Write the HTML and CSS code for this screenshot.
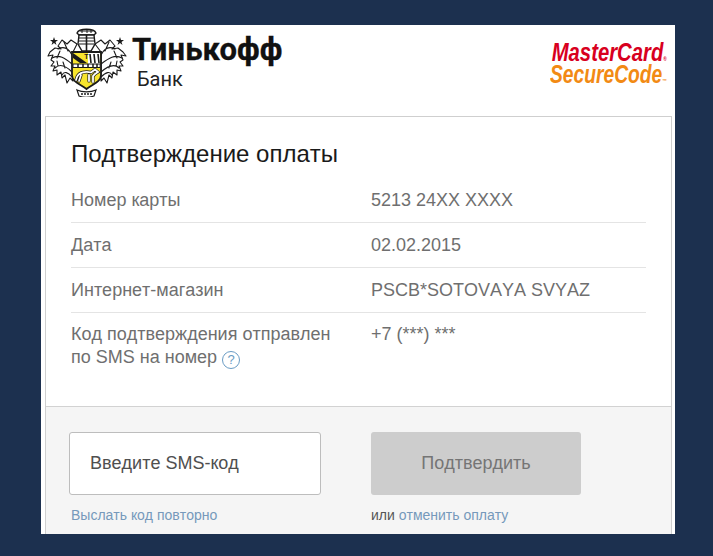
FILE: index.html
```html
<!DOCTYPE html>
<html lang="ru">
<head>
<meta charset="utf-8">
<title>Подтверждение оплаты</title>
<link rel="stylesheet" href="styles.css">
</head>
<body>
<main class="page">
  <header class="head">
    <div class="brand">
      <svg class="crest" viewBox="0 0 86 72" aria-hidden="true">
        <g fill="#fff" stroke="#1a1a1a" stroke-width="1.1" stroke-linejoin="round" stroke-linecap="round">
          <path d="M33 19 L27 15 L23 19 L18 15 L14 21 L17 24 L11 23 L6 27 L4 31 L9 30 L7 35 L10 37 L7 41 L11 41 L9 46 L13 45 L13 50 L17 47 L18 53 L21 50 L23 58 L26 53 L29 56 L29 27 Z"/>
          <path d="M14 24 C20 21 25 24 28 30 M8 33 C15 29 21 33 28 39 M11 43 C16 38 22 41 28 47 M18 50 C20 46 24 47 28 52 M20 17 L24 26 M13 33 L16 26 M14 41 L13 36 M21 43 L19 37" fill="none"/>
          <path d="M51 19 L57 15 L61 19 L66 15 L71 21 L68 24 L74 23 L79 27 L82 31 L77 30 L79 35 L76 37 L79 41 L75 41 L77 46 L73 45 L73 50 L69 47 L68 53 L65 50 L63 58 L60 53 L57 56 L57 27 Z"/>
          <path d="M71 24 C65 21 60 24 57 30 M78 33 C71 29 65 33 57 39 M75 43 C70 38 64 41 57 47 M68 50 C66 46 62 47 57 52 M65 17 L61 26 M73 33 L70 26 M72 41 L73 36 M65 43 L67 37" fill="none"/>
        </g>
        <path d="M10 12 L11 15 L14 15 L11.500 17 L12.500 20 L10 18 L7.500 20 L8.500 17 L6 15 L9 15 Z" fill="#1a1a1a"/>
        <path d="M76 12 L77 15 L80 15 L77.500 17 L78.500 20 L76 18 L73.500 20 L74.500 17 L72 15 L75 15 Z" fill="#1a1a1a"/>
        <path d="M33 8 C35 3 50 3 52 8 L50 10 H35 Z" fill="#fff" stroke="#1a1a1a" stroke-width="1.3"/>
        <path d="M35 10 H50 L51 19 L47 26 H38 L34 19 Z" fill="#fff" stroke="#1a1a1a" stroke-width="1.4"/>
        <path d="M36 6 H49 M38 4.500 V8 M43 4 V8 M47 4.500 V8" stroke="#1a1a1a" stroke-width="1"/>
        <path d="M35 13 H50 M35 16 H50 M35 19 H50" stroke="#1a1a1a" stroke-width="1.1"/>
        <path d="M42.500 10 V26" stroke="#1a1a1a" stroke-width="1.6"/>
        <path d="M28 27 H57 V50 C57 57 49 59 42.500 64 C36 59 28 57 28 50 Z" fill="#f7e52e" stroke="#1a1a1a" stroke-width="1.8"/>
        <path d="M44 28 H56 V39 H44 Z" fill="#fff"/>
        <path d="M29 28 L43 38 L36 38 L29 33 Z" fill="#1a1a1a"/>
        <path d="M46 29 L47 38 M50 29 L51 38 M54 29 L55 38" stroke="#1a1a1a" stroke-width="1.6"/>
        <path d="M29 39 H56.200 V42.500 H29 Z" fill="#fff" stroke="#1a1a1a" stroke-width="1"/>
        <path d="M34 39 V42 M39 39 V42 M44 39 V42 M49 39 V42 M53 39 V42" stroke="#1a1a1a" stroke-width="1.500"/>
        <path d="M33 52 C35 47 42 46 47 47.500 L51 44.500 L54 47 L51 49 L49 51 L49 57 M37 50 L35 56 M45 50 L45 56 M33 52 L32 55" fill="none" stroke="#1a1a1a" stroke-width="3.200" stroke-linecap="round"/>
        <path d="M33 52 C35 47 42 46 47 47.500 L51 44.500 L54 47 L51 49 L49 51 L49 57 M37 50 L35 56 M45 50 L45 56 M33 52 L32 55" fill="none" stroke="#fff" stroke-width="1.800" stroke-linecap="round"/>
        <text class="crest-t" x="42.500" y="34" text-anchor="middle">Т</text>
        <path d="M33 65 C38 67.500 47 67.500 52 65 L50 71 C45 72.500 39 72.500 35 71 Z" fill="#fff" stroke="#1a1a1a" stroke-width="1.200"/>
        <path d="M37 69 H48" stroke="#555" stroke-width="2.200" stroke-dasharray="2 1"/>
      </svg>
      <div class="brand-text">
        <div class="brand-name">Тинькофф</div>
        <div class="brand-sub">Банк</div>
      </div>
    </div>
    <div class="mc">
      <div class="mc-top">MasterCard<sup class="mc-mark">®</sup></div>
      <div class="mc-bottom">SecureCode<sup class="mc-mark">™</sup></div>
    </div>
  </header>
  <section class="card">
    <div class="info">
      <h1 class="title">Подтверждение оплаты</h1>
      <div class="row"><div class="label">Номер карты</div><div class="value">5213 24XX XXXX</div></div>
      <div class="row"><div class="label">Дата</div><div class="value">02.02.2015</div></div>
      <div class="row"><div class="label">Интернет-магазин</div><div class="value">PSCB*SOTOVAYA SVYAZ</div></div>
      <div class="row row-last">
        <div class="label">Код подтверждения отправлен<br>по SMS на номер <span class="hint">?</span></div>
        <div class="value">+7 (***) ***</div>
      </div>
    </div>
    <div class="foot">
      <div class="col col-left">
        <div class="field">Введите SMS-код</div>
        <div class="note"><a class="link" href="#">Выслать код повторно</a></div>
      </div>
      <div class="col col-right">
        <div class="btn">Подтвердить</div>
        <div class="note">или <a class="link" href="#">отменить оплату</a></div>
      </div>
    </div>
  </section>
</main>
</body>
</html>
```

FILE: styles.css
```css
* { box-sizing: border-box; }
html, body { margin: 0; height: 100%; }
body {
  background: #1c304f;
  padding: 25px 38px 22px 41px;
  font-family: "Liberation Sans", Arial, sans-serif;
  font-kerning: none;
  overflow: hidden;
}
.page {
  background: #fff;
  height: 509px;
  padding: 0 3px 0 4px;
  display: flex;
  flex-direction: column;
}
.head {
  height: 91px;
  display: flex;
  justify-content: space-between;
  align-items: flex-start;
}
.brand { display: flex; }
.crest { width: 86px; height: 72px; display: block; margin-left: -1px; }
.crest-t { font-size: 7px; font-weight: 700; font-family: "Liberation Sans", sans-serif; fill: #1a1a1a; }
.brand-text { margin-left: 2px; padding-top: 8px; color: #111; font-family: "Roboto", "Liberation Sans", sans-serif; font-kerning: normal; }
.brand-name { font-size: 31px; line-height: 34px; font-weight: 700; letter-spacing: 0.1px; -webkit-text-stroke: 0.3px #111; }
.brand-sub { font-size: 20px; line-height: 24px; margin-left: 5px; color: #222; }
.mc {
  margin: 16px 5px 0 0;
  font-style: italic;
  font-weight: 700;
  font-size: 26px;
  line-height: 22px;
  text-align: right;
}
.mc-top { color: #d8001e; transform: scaleX(0.78); transform-origin: right center; }
.mc-bottom { color: #f28a14; transform: scaleX(0.74); transform-origin: right center; }
.mc-mark { font-size: 6px; font-style: normal; line-height: 0; vertical-align: baseline; }
.card {
  flex: 1;
  border: 1px solid #cfcfcf;
  border-bottom: 0;
  display: flex;
  flex-direction: column;
}
.info { height: 290px; padding: 21px 25px 0 25px; border-bottom: 1px solid #d2d2d2; }
.title { margin: 0; font-size: 24px; font-weight: 400; line-height: 31px; color: #1a1a1a; height: 40px; }
.row {
  display: flex;
  height: 45px;
  padding-top: 11px;
  border-bottom: 1px solid #e4e4e4;
  color: #6f6f6f;
  font-size: 18px;
  line-height: 23px;
}
.row-last { border-bottom: 0; height: auto; padding-top: 10px; }
.label { width: 300px; flex: none; }
.hint {
  display: inline-block;
  width: 18px;
  height: 18px;
  border: 1.5px solid #6a9cc4;
  border-radius: 50%;
  color: #6a9cc4;
  font-size: 13px;
  line-height: 15px;
  text-align: center;
  vertical-align: -1px;
}
.foot {
  flex: 1;
  background: #f5f5f5;
  display: flex;
  padding: 25px 0 0 23px;
}
.col-left { width: 302px; flex: none; }
.col-right { width: 210px; flex: none; }
.field {
  height: 63px;
  width: 252px;
  background: #fff;
  border: 1px solid #bdbdbd;
  border-radius: 3px;
  padding-left: 20px;
  font-size: 18px;
  line-height: 60px;
  color: #4f4f4f;
}
.btn {
  height: 63px;
  background: #cdcdcd;
  border-radius: 3px;
  text-align: center;
  font-size: 18px;
  line-height: 62px;
  color: #757575;
}
.note { margin-top: 12px; font-size: 14px; line-height: 16px; color: #555; }
.col-left .note { margin-left: 2px; }
.link { color: #7699bb; text-decoration: none; }
```
